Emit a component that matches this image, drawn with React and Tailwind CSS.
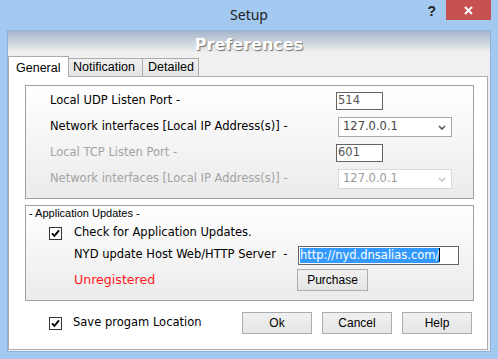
import React from "react";

const CheckBox = () => (
  <span className="w-[13px] h-[13px] border border-[#333333] bg-white flex items-center justify-center shrink-0">
    <svg width="9" height="9" viewBox="0 0 9 9">
      <path d="M1 4.3 L3.4 6.8 L8 1.4" stroke="#000" strokeWidth="1.9" fill="none" />
    </svg>
  </span>
);

const Chevron = ({ color }) => (
  <svg width="8" height="5" viewBox="0 0 8 5" className="shrink-0">
    <path d="M1 1 L4 4 L7 1" stroke={color} strokeWidth="1.6" fill="none" />
  </svg>
);

const Btn = ({ children, w = "w-[70px]" }) => (
  <div
    className={`${w} h-[22px] border border-[#acacac] bg-[linear-gradient(to_bottom,#f0f0f0,#e5e5e5)] flex items-center justify-center text-[12px] text-black font-['Liberation_Sans',sans-serif]`}
  >
    {children}
  </div>
);

export default function App() {
  return (
    <div className="w-[498px] h-[359px] bg-[#a3c9f1] flex flex-col overflow-hidden font-['DejaVu_Sans',sans-serif]">
      {/* title bar */}
      <div className="h-[30px] relative flex items-center justify-center shrink-0">
        <span className="text-[14px] text-[#222] font-['Noto_Sans',sans-serif] -mt-[1px]">Setup</span>
        <div className="absolute top-0 right-[7px] flex items-start">
          <span className="text-[14px] font-bold text-[#222] font-['Liberation_Sans',sans-serif] mr-[10px] mt-[3px] leading-[16px]">?</span>
          <div className="w-[45px] h-[20px] bg-[#c75050] flex items-center justify-center">
            <svg width="9" height="9" viewBox="0 0 9 9">
              <path d="M1 1 L8 8 M8 1 L1 8" stroke="#fff" strokeWidth="2" />
            </svg>
          </div>
        </div>
      </div>

      {/* client area */}
      <div className="mx-[7px] h-[322px] border border-[#8db2db] bg-[#f0f0f0] flex flex-col shrink-0">
        {/* header */}
        <div className="h-[45px] flex flex-col bg-[linear-gradient(to_bottom,#a5b6cb,#f0f0f0_48%)] shrink-0">
          <div className="h-[25px] flex items-center justify-center">
            <span className="text-[16px] font-bold text-white [text-shadow:1px_1px_1px_#6f6f6f] mt-[3px]">Preferences</span>
          </div>
          <div className="h-[20px] flex items-end">
            <div className="relative z-10 h-[21px] -mb-px w-[61px] border border-b-0 border-[#acacac] bg-white flex items-start pl-[7px] pt-[2px] text-[12.5px] text-black font-['Liberation_Sans',sans-serif]">
              General
            </div>
            <div className="h-[18px] w-[74px] border border-b-0 border-l-0 border-[#acacac] bg-[linear-gradient(to_bottom,#f0f0f0,#e5e5e5)] flex items-center pl-[4px] text-[12.5px] text-black font-['Liberation_Sans',sans-serif]">
              Notification
            </div>
            <div className="h-[18px] w-[56px] border border-b-0 border-l-0 border-[#acacac] bg-[linear-gradient(to_bottom,#f0f0f0,#e5e5e5)] flex items-center pl-[5px] text-[12.5px] text-black font-['Liberation_Sans',sans-serif]">
              Detailed
            </div>
          </div>
        </div>

        {/* panel */}
        <div className="flex-1 mr-[2px] mb-[1px] border border-[#acacac] bg-white pl-[16px] pt-[8px] flex flex-col">
          {/* group 1 */}
          <div className="w-[449px] h-[114px] border border-[#a0a0a0] bg-[linear-gradient(to_bottom,#ffffff,#ebebeb)] pt-[2px] pl-[24px] flex flex-col text-[11.5px]">
            <div className="h-[26px] flex items-center">
              <span className="w-[286px] text-black">Local UDP Listen Port -</span>
              <div className="w-[47px] h-[18px] border border-[#646464] bg-white flex items-center pl-[1px] text-[#555]">514</div>
            </div>
            <div className="h-[26px] flex items-center">
              <span className="w-[286px] text-black">Network interfaces [Local IP Address(s)] -</span>
              <div className="ml-[2px] w-[114px] h-[20px] border border-[#a5a5a5] bg-white flex items-center justify-between pl-[4px] pr-[5px] text-[#444]">
                <span>127.0.0.1</span>
                <Chevron color="#555" />
              </div>
            </div>
            <div className="h-[26px] flex items-center">
              <span className="w-[286px] text-[#a3a3a3]">Local TCP Listen Port -</span>
              <div className="w-[47px] h-[18px] border border-[#646464] bg-white flex items-center pl-[1px] text-[#555]">601</div>
            </div>
            <div className="h-[26px] flex items-center">
              <span className="w-[286px] text-[#a3a3a3]">Network interfaces [Local IP Address(s)] -</span>
              <div className="ml-[2px] w-[114px] h-[20px] border border-[#d9d9d9] bg-white flex items-center justify-between pl-[4px] pr-[5px] text-[#9a9a9a]">
                <span>127.0.0.1</span>
                <Chevron color="#c4c4c4" />
              </div>
            </div>
          </div>

          {/* group 2 */}
          <div className="mt-[6px] w-[449px] h-[96px] border border-[#a0a0a0] bg-[linear-gradient(to_bottom,#ffffff,#ebebeb)] flex flex-col text-[11.5px]">
            <div className="h-[14px] leading-[14px] pl-[3px] text-[11px] text-black font-['Liberation_Sans',sans-serif]">
              - Application Updates -
            </div>
            <div className="mt-[4px] h-[18px] flex items-center pl-[23px]">
              <CheckBox />
              <span className="ml-[12px] text-black">Check for Application Updates.</span>
            </div>
            <div className="mt-[4px] h-[18px] flex items-center pl-[48px]">
              <span className="w-[224px] text-black whitespace-pre">NYD update Host Web/HTTP Server  -</span>
              <div className="w-[161px] h-[19px] border border-[#646464] bg-white flex items-center pl-[1px]">
                <span className="bg-[#3399ff] text-white leading-[15px]">http://nyd.dnsalias.com/</span>
                <span className="w-[1px] h-[14px] bg-black" />
              </div>
            </div>
            <div className="mt-[5px] h-[22px] flex items-center pl-[48px]">
              <span className="w-[223px] text-[12.6px] text-[#ff1a1a]">Unregistered</span>
              <Btn w="w-[71px]">Purchase</Btn>
            </div>
          </div>

          {/* bottom row */}
          <div className="mt-[11px] w-[449px] h-[22px] flex items-center pl-[24px]">
            <CheckBox />
            <span className="ml-[11px] text-[11.5px] text-black">Save progam Location</span>
            <div className="ml-auto mr-[2px] flex gap-[10px]">
              <Btn>Ok</Btn>
              <Btn>Cancel</Btn>
              <Btn>Help</Btn>
            </div>
          </div>
        </div>
      </div>
    </div>
  );
}
